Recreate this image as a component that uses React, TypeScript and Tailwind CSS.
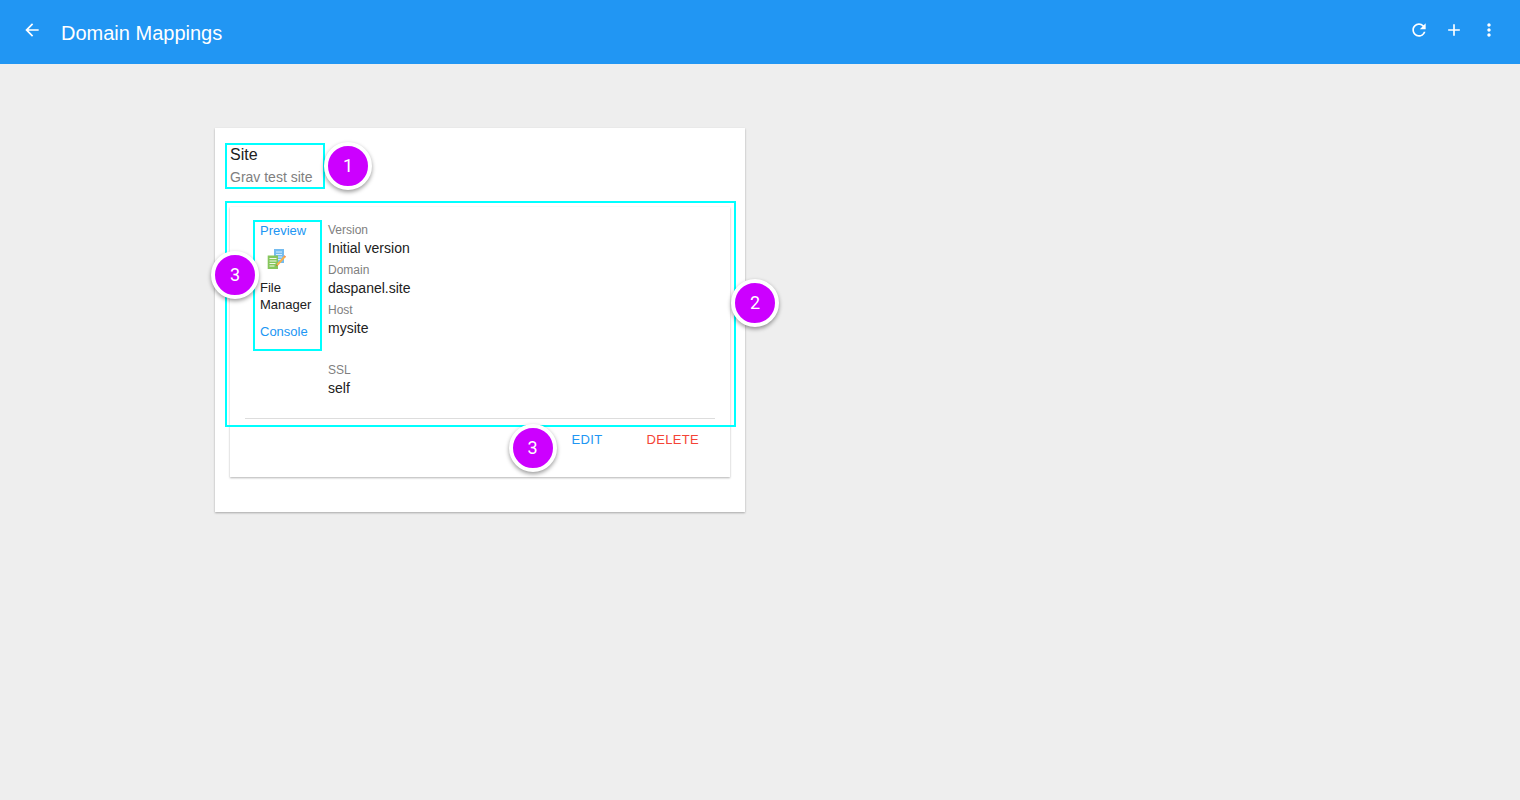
import type { ReactNode } from "react";
import { MdArrowBack, MdRefresh, MdAdd, MdMoreVert } from "react-icons/md";

function Marker({ n, className }: { n: number; className: string }) {
  return (
    <span
      className={`absolute z-10 flex h-12 w-12 items-center justify-center rounded-full border-4 border-white bg-[#cc00ff] pb-px font-['Roboto',sans-serif] text-lg text-white shadow-[0_2px_4px_rgba(0,0,0,0.4)] ${className}`}
    >
      {n}
    </span>
  );
}

function Outline({ className }: { className: string }) {
  return <span aria-hidden="true" className={`pointer-events-none absolute border-2 border-[#00ffff] ${className}`} />;
}

function IconButton({ label, children }: { label: string; children: ReactNode }) {
  return (
    <button type="button" aria-label={label} className="flex h-6 w-[35px] items-center justify-center">
      {children}
    </button>
  );
}

function Field({ label, value }: { label: string; value: string }) {
  return (
    <div>
      <dt className="text-xs leading-4 text-[#808080]">{label}</dt>
      <dd className="text-sm leading-5 text-[#212121]">{value}</dd>
    </div>
  );
}

function FileManagerIcon() {
  return (
    <svg viewBox="0 0 20 22" className="h-[22px] w-5" aria-hidden="true">
      <rect x="7" y="1" width="10" height="14" fill="#74bcf0" />
      <path d="M9 4h6M9 6.5h6M9 9h6M9 11.5h6" stroke="#d5edfc" strokeWidth="1" />
      <rect x="0.7" y="7.5" width="10.3" height="13.5" fill="#86c65c" />
      <path d="M2.5 10.5h7M2.5 13h7M2.5 15.5h6M2.5 18h5" stroke="#f1f9e8" strokeWidth="1.1" />
      <path d="M9.2 18.2l.7-2.4 7.4-8.4 1.6 1.4-7.5 8.4z" fill="#f9b04b" />
      <path d="M9.2 18.2l.5-1.7 1.1 1z" fill="#946b3d" />
      <path d="M16.7 8.1l.7-.8 1.6 1.4-.7.8z" fill="#ee8a61" />
    </svg>
  );
}

export default function App() {
  return (
    <div className="min-h-screen bg-[#eeeeee] font-['Liberation_Sans',Arial,sans-serif] text-[#212121]">
      <header className="flex h-16 items-start bg-[#2196f3] px-[14px] text-white">
        <div className="flex pt-[18px]">
          <IconButton label="Back">
            <MdArrowBack size={20} />
          </IconButton>
        </div>
        <h1 className="ml-3 flex-1 pt-[21px] text-xl leading-6">Domain Mappings</h1>
        <div className="flex pt-[18px]">
          <IconButton label="Refresh">
            <MdRefresh size={20} />
          </IconButton>
          <IconButton label="Add">
            <MdAdd size={20} />
          </IconButton>
          <IconButton label="More options">
            <MdMoreVert size={20} />
          </IconButton>
        </div>
      </header>

      <main className="mx-auto grid max-w-[1090px] grid-cols-2 gap-[30px] pt-16">
        <section className="bg-white px-[15px] pt-[15px] pb-[35px] shadow-[0_1px_2px_rgba(0,0,0,0.3)]">
          <div className="relative w-[95px] pb-[2px]">
            <h2 className="text-base leading-6">Site</h2>
            <p className="text-sm leading-5 whitespace-nowrap text-[#808080]">Grav test site</p>
            <Outline className="-left-[5px] top-0 right-0 bottom-0" />
            <Marker n={1} className="-top-px left-[94px]" />
          </div>

          <article className="mt-[18px] bg-white px-[15px] shadow-[0_1px_2px_rgba(0,0,0,0.3)]">
            <div className="relative border-b border-[#dddddd] pt-[15px] pb-5">
              <Outline className="-top-[6px] -right-[21px] -bottom-[9px] -left-5" />
              <Marker n={2} className="top-[72px] -right-16" />
              <div className="flex pl-[15px]">
                <nav className="relative flex w-[68px] shrink-0 flex-col items-start text-[13px] leading-[17px]">
                  <a href="#preview" className="text-[#2196f3]">
                    Preview
                  </a>
                  <a href="#files" className="mt-[9px] flex flex-col items-start text-[#212121]">
                    <span className="pl-[7px]">
                      <FileManagerIcon />
                    </span>
                    <span className="mt-[9px] w-14">File Manager</span>
                  </a>
                  <a href="#console" className="mt-[10px] text-[#2196f3]">
                    Console
                  </a>
                  <Outline className="-top-[2px] -left-[7px] h-[131px] w-[69px]" />
                  <Marker n={3} className="top-[29px] -left-[49px]" />
                </nav>
                <dl className="flex flex-col gap-1">
                  <Field label="Version" value="Initial version" />
                  <Field label="Domain" value="daspanel.site" />
                  <Field label="Host" value="mysite" />
                  <div className="pt-5">
                    <Field label="SSL" value="self" />
                  </div>
                </dl>
              </div>
            </div>
            <footer className="flex h-[58px] items-start justify-end gap-11 pt-3 pr-4 text-[13px] leading-[18px]">
              <div className="relative flex">
                <Marker n={3} className="-top-[7px] -left-[63px]" />
                <button type="button" className="tracking-wide text-[#2196f3]">
                  EDIT
                </button>
              </div>
              <button type="button" className="tracking-wide text-[#f44336]">
                DELETE
              </button>
            </footer>
          </article>
        </section>
      </main>
    </div>
  );
}
